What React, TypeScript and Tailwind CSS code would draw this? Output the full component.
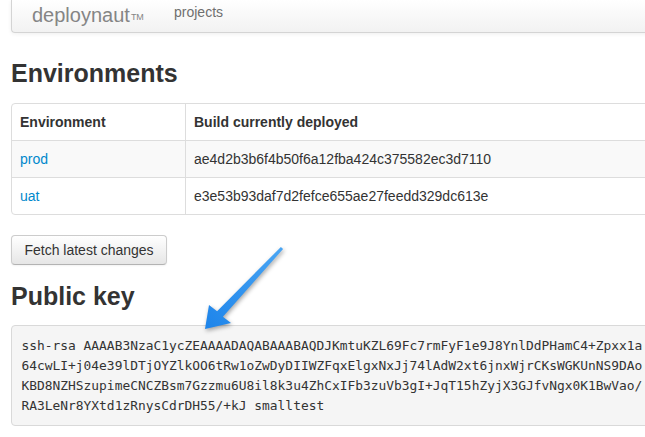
import React from "react";

const keyLines = [
  "ssh-rsa AAAAB3NzaC1ycZEAAAADAQABAAABAQDJKmtuKZL69Fc7rmFyF1e9J8YnlDdPHamC4+Zpxx1a",
  "64cwLI+j04e39lDTjOYZlkOO6tRw1oZwDyDIIWZFqxElgxNxJj74lAdW2xt6jnxWjrCKsWGKUnNS9DAo",
  "KBD8NZHSzupimeCNCZBsm7Gzzmu6U8il8k3u4ZhCxIFb3zuVb3gI+JqT15hZyjX3GJfvNgx0K1BwVao/",
  "RA3LeNr8YXtd1zRnysCdrDH55/+kJ smalltest",
];

export default function App() {
  return (
    <div className="relative w-[645px] h-[437px] overflow-hidden bg-white font-['Liberation_Sans',Arial,sans-serif] text-[#333]">
      <div className="pl-[11px]">
        {/* navbar */}
        <div className="w-[700px] h-[33px] flex items-start border-l border-b border-[#d4d4d4] rounded-bl-[4px] bg-gradient-to-b from-white to-[#f2f2f2] shadow-[0_1px_4px_rgba(0,0,0,0.065)]">
          <div className="w-[162px] shrink-0 pl-[20px] pt-[5px] text-[20px] leading-[20px] text-[#858585]">
            deploynaut<sup className="text-[9px] relative top-[-2px] ml-[1px]">TM</sup>
          </div>
          <div className="pt-[2px] text-[14px] leading-[20px] text-[#6f6f6f]">projects</div>
        </div>

        <h2 className="mt-[20px] text-[25px] leading-[40px] font-bold text-[#333]">Environments</h2>

        <div className="mt-[10px] w-[700px] border border-[#dddddd] rounded-[4px] text-[14px] leading-[20px]">
          <div className="flex h-[36px]">
            <div className="w-[173px] shrink-0 px-[8px] py-[8px] font-bold">Environment</div>
            <div className="flex-1 border-l border-[#dddddd] px-[8px] py-[8px] font-bold">Build currently deployed</div>
          </div>
          <div className="flex h-[37px] border-t border-[#dddddd] bg-[#f9f9f9]">
            <div className="w-[173px] shrink-0 px-[8px] py-[8px] text-[#0088cc]">prod</div>
            <div className="flex-1 border-l border-[#dddddd] px-[8px] py-[8px]">ae4d2b3b6f4b50f6a12fba424c375582ec3d7110</div>
          </div>
          <div className="flex h-[37px] border-t border-[#dddddd]">
            <div className="w-[173px] shrink-0 px-[8px] py-[8px] text-[#0088cc]">uat</div>
            <div className="flex-1 border-l border-[#dddddd] px-[8px] py-[8px]">e3e53b93daf7d2fefce655ae27feedd329dc613e</div>
          </div>
        </div>

        <button className="mt-[20px] h-[30px] w-[156px] rounded-[4px] border border-[#cccccc] border-b-[#b3b3b3] bg-gradient-to-b from-white to-[#e6e6e6] text-[14px] leading-[20px] text-[#333] shadow-[inset_0_1px_0_rgba(255,255,255,0.2),0_1px_2px_rgba(0,0,0,0.05)]">
          Fetch latest changes
        </button>

        <h2 className="mt-[11px] text-[25px] leading-[40px] font-bold text-[#333]">Public key</h2>

        <div className="mt-[9px] w-[700px] rounded-[4px] border border-[#d9d9d9] bg-[#f5f5f5] px-[9.5px] py-[9.5px] text-[12.9px] leading-[20px] text-[#333] font-['DejaVu_Sans_Mono',monospace]">
          {keyLines.map((l, i) => (
            <div key={i} className="whitespace-pre">{l}</div>
          ))}
        </div>
      </div>

      {/* annotation arrow */}
      <svg
        className="absolute left-[190px] top-[240px] drop-shadow-[1px_2px_2px_rgba(0,0,0,0.35)]"
        width="100"
        height="100"
        viewBox="0 0 100 100"
      >
        <defs>
          <linearGradient id="ag" x1="1" y1="0" x2="0" y2="1">
            <stop offset="0" stopColor="#4aa6f4" />
            <stop offset="1" stopColor="#1d84ea" />
          </linearGradient>
        </defs>
        <polygon
          points="90.9,7 27.1,71.2 19,65 15,89 41,83 32.9,76.8 93.1,9"
          fill="url(#ag)"
          strokeLinejoin="round"
        />
      </svg>
    </div>
  );
}
